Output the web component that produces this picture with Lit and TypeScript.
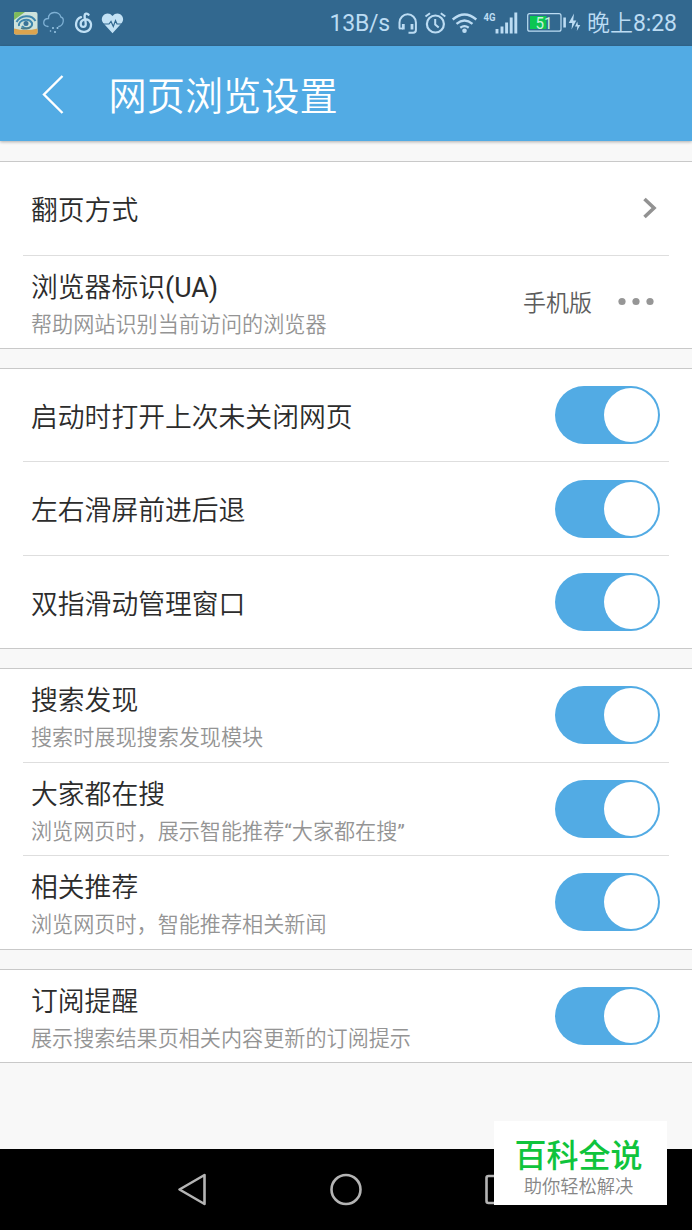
import { LitElement, html, css, svg, nothing } from "lit";
import { customElement, property } from "lit/decorators.js";

type Control = "chevron" | "more" | "switch";

interface Row {
  title: string;
  note?: string;
  value?: string;
  control: Control;
}

const groups: Row[][] = [
  [
    { title: "翻页方式", control: "chevron" },
    { title: "浏览器标识(UA)", note: "帮助网站识别当前访问的浏览器", value: "手机版", control: "more" },
  ],
  [
    { title: "启动时打开上次未关闭网页", control: "switch" },
    { title: "左右滑屏前进后退", control: "switch" },
    { title: "双指滑动管理窗口", control: "switch" },
  ],
  [
    { title: "搜索发现", note: "搜索时展现搜索发现模块", control: "switch" },
    { title: "大家都在搜", note: "浏览网页时，展示智能推荐“大家都在搜”", control: "switch" },
    { title: "相关推荐", note: "浏览网页时，智能推荐相关新闻", control: "switch" },
  ],
  [{ title: "订阅提醒", note: "展示搜索结果页相关内容更新的订阅提示", control: "switch" }],
];

// Latin runs and curly quotes keep the regular weight next to the lighter Chinese text.
const mixed = (text: string) =>
  text
    .split(/([\x20-\x7e“”]+)/)
    .filter(Boolean)
    .map((run) => (/^[\x20-\x7e“”]/.test(run) ? html`<span class="latin">${run}</span>` : run));

@customElement("status-bar")
class StatusBar extends LitElement {
  static styles = css`
    :host {
      display: flex;
      justify-content: space-between;
      height: 46px;
      background: #32688f;
      color: #bcdcf3;
      font-size: 23px;
      line-height: 46px;
      white-space: nowrap;
    }
    svg { display: block; flex: none; }
    .side { display: flex; }
    .rate { width: 66.500px; padding-top: 1px; letter-spacing: -0.2px; }
    .time { width: 105px; padding-top: 1px; font-weight: 350; }
    .latin { font-weight: 400; letter-spacing: -0.1px; }
    .num { font-size: 16px; fill: #c9f3dc; }
    .net { font-size: 11px; font-weight: 700; fill: #bcdcf3; }
  `;

  render() {
    return html`
      <div class="side">
        <svg width="140" height="46" viewBox="0 0 140 46" fill="none">
          <rect x="14" y="12" width="23.5" height="22.5" rx="2" fill="#cfe3dc" />
          <path d="M14 20V14q0-2 2-2h9z" fill="#7fba5c" />
          <path d="M14 28.500q12 3 23.500 0V32.500q0 2-2 2H16q-2 0-2-2z" fill="#dba44f" />
          <path d="M16.500 22c4-7 15-8 19-1M19 26c-1-6 10-9 13-3 1 5-7 7-10 3" stroke="#3f87ad" stroke-width="2" />
          <circle cx="26" cy="23.500" r="2.500" fill="#397397" />
          <path d="M21 28q5 2 10-1" stroke="#4b7a86" stroke-width="1.500" />
          <path d="M49.500 28c-6.500-1-5-8 .5-8-.5-8 11.500-7.500 12.300-1.500 4 1 3 8.500-2 9.500" transform="translate(-1.500 -1.500)" stroke="#7eb0d4" stroke-width="1.300" stroke-linecap="round" />
          <g fill="#9cc8e6"><circle cx="53" cy="28" r="1" /><circle cx="57.500" cy="28" r="1" /><circle cx="50.500" cy="31" r=".8" /><circle cx="55" cy="32" r="1" /></g>
          <path d="M81 17.200c-5.500 2-6.500 9.300-2.500 12.700 4.200 3.500 11 2 12.300-3.200 1.200-5-3-8.700-7.200-7-4.200 1.700-3.600 7.200-.2 7.200 3.200-.2 2.400-3.700 1.900-6.500-.8-3.600-1.500-6 .7-6.700 1.200-.3 2 .2 2.600 1" stroke="#c0e0f5" stroke-width="2.300" stroke-linecap="round" />
          <path d="M112.500 33.300 103.200 23c-4.800-6 4.200-13.500 9.300-6.900 5.100-6.600 14.100.9 9.300 6.900z" fill="#c3e2f5" />
          <path d="M102 24h7l2-2.500 2.300 5 2.200-6 1.500 3.500h6" stroke="#32688f" stroke-width="1.200" />
        </svg>
      </div>
      <div class="side">
        <span class="rate">13B/s</span>
        <svg width="191" height="46" viewBox="396 0 191 46" fill="none" stroke="#bcdcf3">
          <path d="M399.500 28.500v-6a8.200 8.200 0 0 1 16.400 0V30q0 2.800-2.800 2.800H408.500" stroke-width="2" />
          <path d="M403.300 24v5.500M412 24v5.500" stroke-width="2.800" />
          <path d="M399 28.500h4" stroke-width="1.800" />
          <circle cx="435.400" cy="24" r="8.500" stroke-width="2.200" />
          <path d="M435.200 19v5.500l3.500 3M425.500 16.500l4.500-3.300M445.300 16.500l-4.500-3.300" stroke-width="2" />
          <path d="M452.700 19.500q11.800-10 23.600 0M456.500 23.800q8-6.500 16 0M460.300 27.700q4.200-3 8.400 0" stroke-width="2.300" />
          <circle cx="464.500" cy="30.700" r="2.300" fill="#bcdcf3" stroke="none" />
          <text class="net" stroke="none" x="483.500" y="21" textLength="12" lengthAdjust="spacingAndGlyphs">4G</text>
          <path d="M497 33.500v-4.500M502 33.500v-7M506.600 33.500v-11M511.200 33.500v-16M515.800 33.500v-21" stroke-width="2.900" />
          <rect x="527.700" y="13.700" width="33.300" height="17.500" rx="2" stroke-width="1.200" />
          <rect x="530" y="16" width="16.500" height="13" fill="#0cc653" stroke="none" />
          <text class="num" stroke="none" x="535.500" y="28.600" textLength="17" lengthAdjust="spacingAndGlyphs">51</text>
          <path d="M564.600 17.500v10" stroke-width="2.600" />
          <path d="m574 13.500-5.300 9.500h3.500l-.7 6.500 4.800-9h-3.100zM577.300 21.500l-2.300 5h2.300l-.5 4.500 3.500-6h-2.400z" fill="#bcdcf3" stroke="none" />
        </svg>
        <span class="time">${mixed("晚上8:28")}</span>
      </div>
    `;
  }
}

@customElement("toggle-switch")
class ToggleSwitch extends LitElement {
  static styles = css`
    :host {
      box-sizing: border-box;
      display: flex;
      justify-content: flex-end;
      align-items: center;
      width: 105.500px;
      height: 58px;
      padding-right: 2.500px;
      border-radius: 29px;
      background: #52abe4;
    }
    .knob { width: 54px; height: 54px; border-radius: 50%; background: #fff; }
  `;
  render() {
    return html`<div class="knob"></div>`;
  }
}

@customElement("setting-row")
class SettingRow extends LitElement {
  @property({ attribute: false }) row!: Row;

  static styles = css`
    :host { display: flex; flex: 1; margin: 0 23px; }
    .row {
      flex: 1;
      display: flex;
      align-items: center;
      justify-content: space-between;
      padding: 0 9px 0 8px;
    }
    .text { display: flex; flex-direction: column; white-space: nowrap; font-weight: 350; }
    .latin { font-weight: 400; }
    .title { color: #2c2c2c; font-size: 26.800px; line-height: 40px; padding-top: 5.500px; }
    .noted .title { padding-top: 4px; }
    .note { color: #949494; font-size: 21.120px; line-height: 30px; margin-top: 2px; }
    .end { display: flex; align-items: center; }
    .value { color: #5c5c5c; font-size: 23px; font-weight: 350; line-height: 34px; padding-top: 5px; margin-right: 25px; }
    svg { display: block; }
    .chevron { margin-right: 1px; }
    .more { margin-right: 5px; }
  `;

  renderControl() {
    switch (this.row.control) {
      case "chevron":
        return html`<svg class="chevron" width="18" height="24" viewBox="0 0 18 24">
          <path d="m3.500 3 9.500 9-9.500 9" fill="none" stroke="#929292" stroke-width="3.600" />
        </svg>`;
      case "more":
        return html`<svg class="more" width="38" height="10" viewBox="0 0 38 10">
          ${[5, 19, 33].map((x) => svg`<circle cx=${x} cy="4.500" r="3.600" fill="#969696" />`)}
        </svg>`;
      default:
        return html`<toggle-switch></toggle-switch>`;
    }
  }

  render() {
    const { title, note, value } = this.row;
    return html`<div class="row ${note ? "noted" : ""}">
      <div class="text">
        <span class="title">${mixed(title)}</span>
        ${note ? html`<span class="note">${mixed(note)}</span>` : nothing}
      </div>
      <div class="end">
        ${value ? html`<span class="value">${value}</span>` : nothing}
        ${this.renderControl()}
      </div>
    </div>`;
  }
}

@customElement("app-root")
class AppRoot extends LitElement {
  static styles = css`
    :host {
      position: relative;
      display: flex;
      flex-direction: column;
      width: 692px;
      height: 1230px;
      overflow: hidden;
      background: #f8f8f8;
      font-family: Roboto, "Noto Sans CJK SC", sans-serif;
    }
    svg { display: block; }
    .header {
      display: flex;
      align-items: center;
      height: 95px;
      flex: none;
      background: #52abe4;
      color: #fff;
      box-shadow: 0 1px 3px rgba(0, 0, 0, 0.3);
    }
    .back { margin: 0 40.500px 0 40px; }
    .heading { margin: 0; font-size: 38.200px; font-weight: 350; line-height: 56px; padding-top: 6px; }
    .list { flex: 1; display: flex; flex-direction: column; gap: 19px; padding-top: 20px; }
    .group {
      box-sizing: border-box;
      display: flex;
      flex-direction: column;
      background: #fff;
      border-top: 1px solid #c9c9c9;
      border-bottom: 1px solid #c9c9c9;
    }
    .rows-1 { height: 94px; }
    .rows-2 { height: 188px; }
    .rows-3 { height: 281.250px; }
    .line { height: 1px; margin: 0 23px; background: #dedede; }
    .nav { height: 81px; flex: none; background: #000; }
    .badge {
      position: absolute;
      left: 494px;
      top: 1121px;
      width: 173px;
      height: 84px;
      background: #fff;
      display: flex;
      flex-direction: column;
      align-items: center;
      white-space: nowrap;
    }
    .brand { color: #0fc43c; font-size: 32px; font-weight: 500; line-height: 40px; margin-top: 15px; padding-right: 4px; }
    .slogan { color: #868686; font-size: 18.300px; font-weight: 350; line-height: 22px; padding-right: 4px; }
  `;

  render() {
    return html`
      <status-bar></status-bar>
      <div class="header">
        <svg class="back" width="28" height="42" viewBox="0 0 28 42">
          <path d="M22.500 3 4 21.500 22.500 40" fill="none" stroke="#fff" stroke-width="2.400" />
        </svg>
        <h1 class="heading">网页浏览设置</h1>
      </div>
      <div class="list">
        ${groups.map(
          (rows) => html`<div class="group rows-${rows.length}">
            ${rows.map(
              (row, i) => html`${i ? html`<div class="line"></div>` : nothing}
                <setting-row .row=${row}></setting-row>`
            )}
          </div>`
        )}
      </div>
      <div class="nav">
        <svg width="692" height="81" viewBox="0 1149 692 81" fill="none" stroke="#b4b4b4" stroke-width="2.600" stroke-linejoin="round">
          <path d="M204.500 1175v29L179.500 1189.500z" />
          <circle cx="346" cy="1189.500" r="14.500" />
          <rect x="486.500" y="1176" width="28" height="27" rx="2" />
        </svg>
      </div>
      <div class="badge">
        <span class="brand">百科全说</span>
        <span class="slogan">助你轻松解决</span>
      </div>
    `;
  }
}
